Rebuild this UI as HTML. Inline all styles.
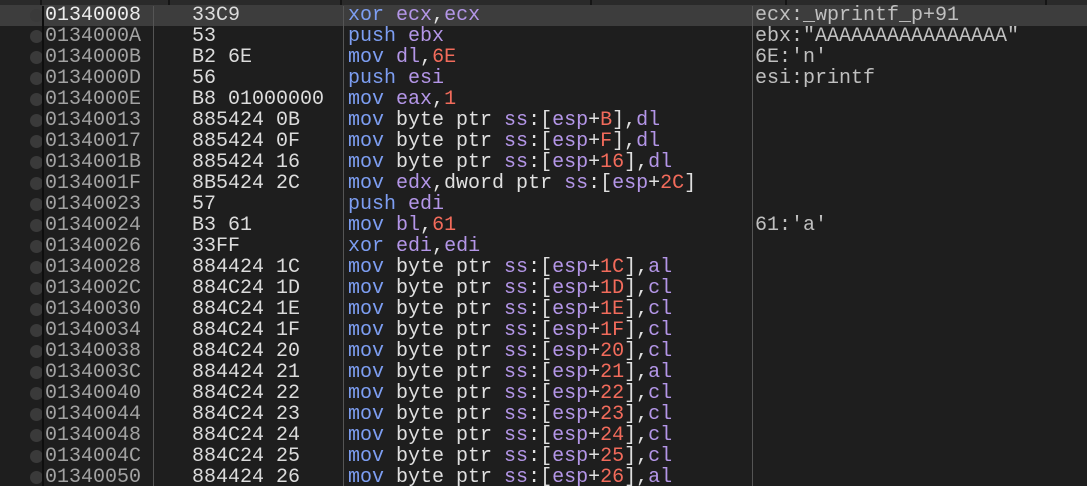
<!DOCTYPE html>
<html><head><meta charset="utf-8"><style>
html,body{margin:0;width:1087px;height:486px;overflow:hidden}
body{background:#1e1e1e;font-family:"Liberation Mono",monospace;font-size:20px;position:relative}
.hdr{position:absolute;left:0;top:0;width:1087px;height:5px;background:#2a2a2a;border-bottom:1px solid #0c0c0c}
.hdr i{position:absolute;top:0;width:2px;height:5px;background:#151515}
.vl{position:absolute;top:6px;height:480px;width:1px;background:#555}
.row{position:absolute;left:0;width:1087px;height:21px;line-height:21px;white-space:pre;overflow:hidden}
.row.sel{background:#3d3d3d;top:5px}
.dot{position:absolute;left:30px;top:4px;width:13px;height:13px;border-radius:7px;background:#3a3a3a}
.a{position:absolute;left:45px;color:#a2a2a2}
.sel .a{color:#ececec}
.b{position:absolute;left:192px;color:#dcdcdc}
.d{position:absolute;left:348px;color:#e0e0e0}
.c{position:absolute;left:755px;color:#c0c0c0}
.m{color:#7d9ef2}.r{color:#b496e8}.n{color:#f26b5b}
.lb{position:absolute;left:42px;top:6px;height:480px;width:2px;background:#0e0e0e}
</style></head><body>
<div class="hdr"><i style="left:40px"></i><i style="left:168px"></i><i style="left:340px"></i><i style="left:590px"></i><i style="left:785px"></i><i style="left:1045px"></i></div>
<div class="row sel" style="top:5px"><span class="dot"></span><span class="a">01340008</span><span class="b">33C9</span><span class="d"><span class="m">xor</span> <span class="r">ecx</span>,<span class="r">ecx</span></span><span class="c">ecx:_wprintf_p+91</span></div>
<div class="row" style="top:26px"><span class="dot"></span><span class="a">0134000A</span><span class="b">53</span><span class="d"><span class="m">push</span> <span class="r">ebx</span></span><span class="c">ebx:"AAAAAAAAAAAAAAAA"</span></div>
<div class="row" style="top:47px"><span class="dot"></span><span class="a">0134000B</span><span class="b">B2 6E</span><span class="d"><span class="m">mov</span> <span class="r">dl</span>,<span class="n">6E</span></span><span class="c">6E:'n'</span></div>
<div class="row" style="top:68px"><span class="dot"></span><span class="a">0134000D</span><span class="b">56</span><span class="d"><span class="m">push</span> <span class="r">esi</span></span><span class="c">esi:printf</span></div>
<div class="row" style="top:89px"><span class="dot"></span><span class="a">0134000E</span><span class="b">B8 01000000</span><span class="d"><span class="m">mov</span> <span class="r">eax</span>,<span class="n">1</span></span></div>
<div class="row" style="top:110px"><span class="dot"></span><span class="a">01340013</span><span class="b">885424 0B</span><span class="d"><span class="m">mov</span> byte ptr <span class="r">ss</span>:[<span class="r">esp</span>+<span class="n">B</span>],<span class="r">dl</span></span></div>
<div class="row" style="top:131px"><span class="dot"></span><span class="a">01340017</span><span class="b">885424 0F</span><span class="d"><span class="m">mov</span> byte ptr <span class="r">ss</span>:[<span class="r">esp</span>+<span class="n">F</span>],<span class="r">dl</span></span></div>
<div class="row" style="top:152px"><span class="dot"></span><span class="a">0134001B</span><span class="b">885424 16</span><span class="d"><span class="m">mov</span> byte ptr <span class="r">ss</span>:[<span class="r">esp</span>+<span class="n">16</span>],<span class="r">dl</span></span></div>
<div class="row" style="top:173px"><span class="dot"></span><span class="a">0134001F</span><span class="b">8B5424 2C</span><span class="d"><span class="m">mov</span> <span class="r">edx</span>,dword ptr <span class="r">ss</span>:[<span class="r">esp</span>+<span class="n">2C</span>]</span></div>
<div class="row" style="top:194px"><span class="dot"></span><span class="a">01340023</span><span class="b">57</span><span class="d"><span class="m">push</span> <span class="r">edi</span></span></div>
<div class="row" style="top:215px"><span class="dot"></span><span class="a">01340024</span><span class="b">B3 61</span><span class="d"><span class="m">mov</span> <span class="r">bl</span>,<span class="n">61</span></span><span class="c">61:'a'</span></div>
<div class="row" style="top:236px"><span class="dot"></span><span class="a">01340026</span><span class="b">33FF</span><span class="d"><span class="m">xor</span> <span class="r">edi</span>,<span class="r">edi</span></span></div>
<div class="row" style="top:257px"><span class="dot"></span><span class="a">01340028</span><span class="b">884424 1C</span><span class="d"><span class="m">mov</span> byte ptr <span class="r">ss</span>:[<span class="r">esp</span>+<span class="n">1C</span>],<span class="r">al</span></span></div>
<div class="row" style="top:278px"><span class="dot"></span><span class="a">0134002C</span><span class="b">884C24 1D</span><span class="d"><span class="m">mov</span> byte ptr <span class="r">ss</span>:[<span class="r">esp</span>+<span class="n">1D</span>],<span class="r">cl</span></span></div>
<div class="row" style="top:299px"><span class="dot"></span><span class="a">01340030</span><span class="b">884C24 1E</span><span class="d"><span class="m">mov</span> byte ptr <span class="r">ss</span>:[<span class="r">esp</span>+<span class="n">1E</span>],<span class="r">cl</span></span></div>
<div class="row" style="top:320px"><span class="dot"></span><span class="a">01340034</span><span class="b">884C24 1F</span><span class="d"><span class="m">mov</span> byte ptr <span class="r">ss</span>:[<span class="r">esp</span>+<span class="n">1F</span>],<span class="r">cl</span></span></div>
<div class="row" style="top:341px"><span class="dot"></span><span class="a">01340038</span><span class="b">884C24 20</span><span class="d"><span class="m">mov</span> byte ptr <span class="r">ss</span>:[<span class="r">esp</span>+<span class="n">20</span>],<span class="r">cl</span></span></div>
<div class="row" style="top:362px"><span class="dot"></span><span class="a">0134003C</span><span class="b">884424 21</span><span class="d"><span class="m">mov</span> byte ptr <span class="r">ss</span>:[<span class="r">esp</span>+<span class="n">21</span>],<span class="r">al</span></span></div>
<div class="row" style="top:383px"><span class="dot"></span><span class="a">01340040</span><span class="b">884C24 22</span><span class="d"><span class="m">mov</span> byte ptr <span class="r">ss</span>:[<span class="r">esp</span>+<span class="n">22</span>],<span class="r">cl</span></span></div>
<div class="row" style="top:404px"><span class="dot"></span><span class="a">01340044</span><span class="b">884C24 23</span><span class="d"><span class="m">mov</span> byte ptr <span class="r">ss</span>:[<span class="r">esp</span>+<span class="n">23</span>],<span class="r">cl</span></span></div>
<div class="row" style="top:425px"><span class="dot"></span><span class="a">01340048</span><span class="b">884C24 24</span><span class="d"><span class="m">mov</span> byte ptr <span class="r">ss</span>:[<span class="r">esp</span>+<span class="n">24</span>],<span class="r">cl</span></span></div>
<div class="row" style="top:446px"><span class="dot"></span><span class="a">0134004C</span><span class="b">884C24 25</span><span class="d"><span class="m">mov</span> byte ptr <span class="r">ss</span>:[<span class="r">esp</span>+<span class="n">25</span>],<span class="r">cl</span></span></div>
<div class="row" style="top:467px"><span class="dot"></span><span class="a">01340050</span><span class="b">884424 26</span><span class="d"><span class="m">mov</span> byte ptr <span class="r">ss</span>:[<span class="r">esp</span>+<span class="n">26</span>],<span class="r">al</span></span></div>
<div class="lb"></div>
<div class="vl" style="left:153px"></div>
<div class="vl" style="left:343px"></div>
<div class="vl" style="left:752px"></div>
</body></html>
